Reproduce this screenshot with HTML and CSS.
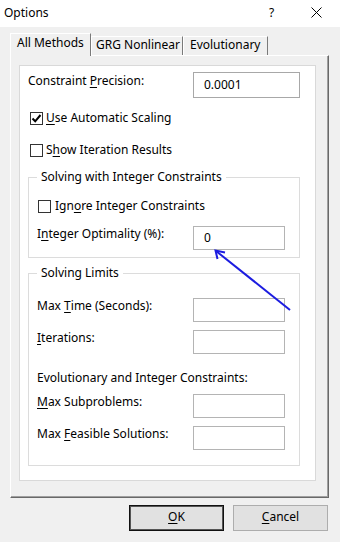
FILE: index.html
```html
<!DOCTYPE html>
<html>
<head>
<meta charset="utf-8">
<title>Options</title>
<link rel="stylesheet" href="styles.css">
</head>
<body>
<div class="titlebar">
  <span class="title">Options</span>
  <span class="help">?</span>
  <svg class="close" width="11" height="11" viewBox="0 0 11 11"><path d="M0.5 0.5 L10.5 10.5 M10.5 0.5 L0.5 10.5" stroke="#000" stroke-width="1" fill="none"/></svg>
</div>

<div class="tabs">
  <div class="tab tab-active tab-all">All Methods</div>
  <div class="tab tab-grg">GRG Nonlinear</div>
  <div class="tab tab-evo">Evolutionary</div>
</div>

<div class="panel">
  <div class="page">
    <div class="row row-top">
      <span class="label">Constraint <u>P</u>recision:</span>
      <div class="input input-wide">0.0001</div>
    </div>
    <div class="check check-1"><span class="box checked"><svg width="11" height="11" viewBox="0 0 11 11"><path d="M1.5 5.5 L4.2 8.3 L9.5 2" stroke="#000" stroke-width="2" fill="none"/></svg></span><span><u>U</u>se Automatic Scaling</span></div>
    <div class="check check-2"><span class="box"></span><span>S<u>h</u>ow Iteration Results</span></div>

    <fieldset class="group group-int">
      <legend>Solving with Integer Constraints</legend>
      <div class="check check-3"><span class="box"></span><span>Ign<u>o</u>re Integer Constraints</span></div>
      <div class="row row-int">
        <span class="label">I<u>n</u>teger Optimality (%):</span>
        <div class="input">0</div>
      </div>
    </fieldset>

    <fieldset class="group group-lim">
      <legend>Solving Limits</legend>
      <div class="row row-time">
        <span class="label">Max <u>T</u>ime (Seconds):</span>
        <div class="input"></div>
      </div>
      <div class="row row-gap">
        <span class="label"><u>I</u>terations:</span>
        <div class="input"></div>
      </div>
      <div class="note">Evolutionary and Integer Constraints:</div>
      <div class="row row-sub">
        <span class="label"><u>M</u>ax Subproblems:</span>
        <div class="input"></div>
      </div>
      <div class="row row-gap">
        <span class="label">Max <u>F</u>easible Solutions:</span>
        <div class="input"></div>
      </div>
    </fieldset>
  </div>
</div>

<div class="buttons">
  <div class="btn btn-default"><u>O</u>K</div>
  <div class="btn"><u>C</u>ancel</div>
</div>

<svg class="arrow" width="340" height="542" viewBox="0 0 340 542">
  <path d="M290 310 L216 251" stroke="#1c1ce0" stroke-width="2" fill="none"/>
  <path d="M217.5 259 L215.5 250.5 L225 252.5" stroke="#1c1ce0" stroke-width="2" fill="none" stroke-linejoin="miter"/>
</svg>
</body>
</html>
```

FILE: styles.css
```css
html, body {
  margin: 0;
  padding: 0;
}
body {
  width: 340px;
  height: 542px;
  overflow: hidden;
  position: relative;
  background: #f0f0f0;
  font-family: "Noto Sans", "Open Sans", sans-serif;
  font-size: 12px;
  line-height: 16px;
  color: #000;
}
u {
  text-decoration: underline;
  text-underline-offset: 2px;
}

.titlebar {
  height: 27px;
  background: #fff;
  display: flex;
  align-items: center;
  padding-left: 4px;
  box-sizing: border-box;
}
.title {
  flex: 1;
  margin-top: -1px;
}
.help {
  width: 8px;
  margin-right: 34px;
  margin-top: -1px;
}
.close {
  margin-right: 18px;
  margin-top: -2px;
}

.tabs {
  margin-top: 6px;
  margin-left: 10px;
  height: 22px;
  display: flex;
  align-items: flex-end;
  position: relative;
  z-index: 2;
}
.tab {
  box-sizing: border-box;
  height: 19px;
  background: #f0f0f0;
  border-left: 1px solid #fff;
  border-top: 1px solid #fff;
  border-right: 1px solid #7a7a7a;
  padding-top: 0px;
  padding-left: 4px;
  white-space: nowrap;
}
.tab-active {
  height: 23px;
  margin-bottom: -1px;
  padding-top: 1px;
  padding-left: 6px;
}
.tab-all { width: 81px; }
.tab-grg { width: 92px; }
.tab-evo { width: 85px; padding-left: 6px; }

.panel {
  box-sizing: border-box;
  margin-left: 10px;
  width: 319px;
  height: 443px;
  border-left: 1px solid #fff;
  border-top: 1px solid #fff;
  border-right: 1px solid #696969;
  border-bottom: 1px solid #696969;
  box-shadow: inset -1px -1px 0 #a0a0a0;
  padding-top: 9px;
  padding-left: 8px;
}
.page {
  box-sizing: border-box;
  width: 297px;
  height: 416px;
  background: #fff;
  border: 1px solid #d9d9d9;
  padding-left: 8px;
}

.row {
  display: flex;
  align-items: flex-start;
  height: 24px;
}
.label {
  display: block;
  width: 156px;
  flex: none;
  white-space: nowrap;
}
.row-top {
  margin-top: 6px;
  height: 26px;
}
.row-top .label {
  width: 165px;
  margin-top: 1px;
}
.input {
  box-sizing: border-box;
  width: 92px;
  height: 24px;
  border: 1px solid #b4b4b4;
  background: #fff;
  padding-left: 10px;
  padding-top: 3px;
  line-height: 16px;
}
.input-wide {
  width: 107px;
  height: 26px;
  border-color: #a8a8a8;
  padding-top: 4px;
}

.check {
  display: flex;
  align-items: center;
  height: 16px;
  gap: 3px;
  white-space: nowrap;
}
.box {
  box-sizing: border-box;
  width: 13px;
  height: 13px;
  border: 1px solid #333;
  background: #fff;
  display: flex;
  align-items: center;
  justify-content: center;
}
.check-1 {
  margin-top: 12px;
  padding-left: 2px;
}
.check-2 {
  margin-top: 16px;
  padding-left: 2px;
}

.group {
  box-sizing: border-box;
  width: 272px;
  margin: 0;
  padding: 0 0 0 8px;
  border: 1px solid #dcdcdc;
  min-width: 0;
}
.group legend {
  margin-left: 0;
  padding: 0 4px;
  line-height: 16px;
  white-space: nowrap;
}
.group-int {
  margin-top: 11px;
  padding-bottom: 7px;
}
.check-3 {
  margin-top: 13px;
  padding-left: 1px;
  gap: 4px;
}
.row-int {
  margin-top: 12px;
}
.group-lim {
  margin-top: 7px;
  padding-bottom: 15px;
}
.row-time {
  margin-top: 17px;
}
.row-gap {
  margin-top: 8px;
}
.note {
  margin-top: 16px;
  white-space: nowrap;
}
.row-sub {
  margin-top: 8px;
}

.buttons {
  display: flex;
  justify-content: flex-end;
  gap: 9px;
  padding-right: 12px;
  margin-top: 7px;
}
.btn {
  box-sizing: border-box;
  width: 95px;
  height: 26px;
  background: #e1e1e1;
  border: 1px solid #adadad;
  text-align: center;
  line-height: 22px;
}
.btn-default {
  border: 1px solid #111;
  box-shadow: inset 0 0 0 1px #555;
}

.arrow {
  position: absolute;
  left: 0;
  top: 0;
  pointer-events: none;
  z-index: 5;
}
```
